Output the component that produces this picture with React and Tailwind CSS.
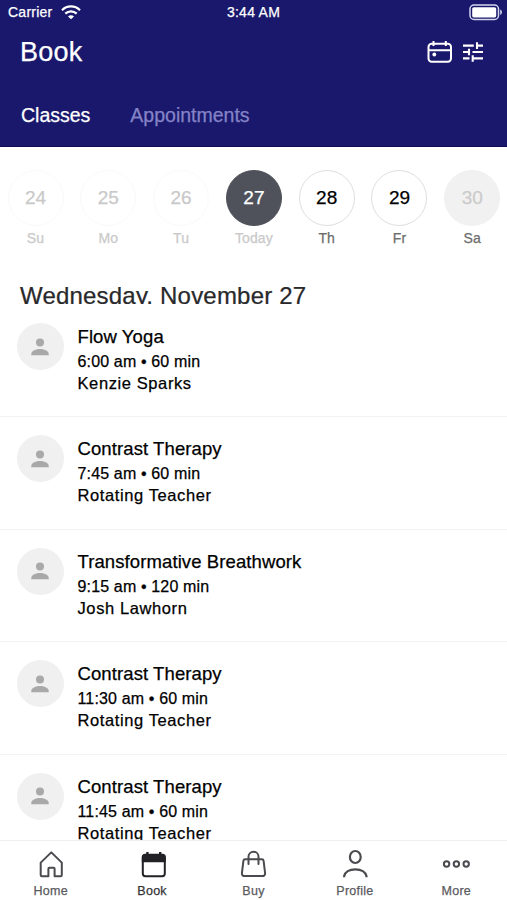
const DAYS = [
  { n: 24, label: "Su", circle: "border-[#fafafa] text-[#c9c9c9]", text: "text-[#c9c9c9]" },
  { n: 25, label: "Mo", circle: "border-[#fafafa] text-[#c9c9c9]", text: "text-[#c9c9c9]" },
  { n: 26, label: "Tu", circle: "border-[#fafafa] text-[#c9c9c9]", text: "text-[#c9c9c9]" },
  { n: 27, label: "Today", circle: "border-[#50525b] bg-[#50525b] text-white", text: "text-[#c9c9c9]" },
  { n: 28, label: "Th", circle: "border-[#dedede] text-black", text: "text-[#6c6c6c]" },
  { n: 29, label: "Fr", circle: "border-[#dedede] text-black", text: "text-[#6c6c6c]" },
  { n: 30, label: "Sa", circle: "border-[#f1f1f1] bg-[#f1f1f1] text-[#cbcbcb]", text: "text-[#6c6c6c]" },
];

const CLASSES = [
  { title: "Flow Yoga", time: "6:00 am • 60 min", teacher: "Kenzie Sparks" },
  { title: "Contrast Therapy", time: "7:45 am • 60 min", teacher: "Rotating Teacher" },
  { title: "Transformative Breathwork", time: "9:15 am • 120 min", teacher: "Josh Lawhorn" },
  { title: "Contrast Therapy", time: "11:30 am • 60 min", teacher: "Rotating Teacher" },
  { title: "Contrast Therapy", time: "11:45 am • 60 min", teacher: "Rotating Teacher" },
];

function WifiIcon() {
  return (
    <svg width="20" height="15" viewBox="0 0 20 15" fill="none" stroke="white" strokeWidth="2.2">
      <path d="M1 5.2C6 .2 14 .2 19 5.2" />
      <path d="M4.3 8.6c3.3-3.1 8.1-3.1 11.4 0" />
      <path d="M10 14.3 7 11.4c1.7-1.6 4.3-1.6 6 0Z" fill="white" stroke="none" />
    </svg>
  );
}

function BatteryIcon() {
  return (
    <svg width="34" height="17" viewBox="0 0 34 17" fill="none">
      <rect x="1" y="1" width="28.5" height="14.5" rx="4" stroke="#d5d5ee" strokeWidth="1.5" />
      <rect x="3.2" y="3.2" width="24" height="10.2" rx="1.6" fill="white" />
      <path d="M31.2 5.6c2.3.8 2.3 4.6 0 5.4Z" fill="#d5d5ee" />
    </svg>
  );
}

function CalendarIcon() {
  return (
    <svg width="26" height="24" viewBox="0 0 26 24" fill="none" stroke="white" strokeWidth="2">
      <rect x="1.5" y="3.7" width="22.5" height="18" rx="3.2" />
      <path d="M2 10.3h21.5M6.5 1v5M18.8 1v5" />
      <circle cx="7.3" cy="14.5" r="1.9" fill="white" stroke="none" />
    </svg>
  );
}

function TuneIcon() {
  return (
    <svg width="20" height="20" viewBox="0 0 20 20" fill="none" stroke="white" strokeWidth="2.1">
      <path d="M0 3.6h10.8M14 .3v6.6M14 3.6h6M0 10h6M6 6.8v6.5M9.5 10H20M0 16.4h6.5M9.7 13.2v6.5M9.7 16.4H20" />
    </svg>
  );
}

function PersonIcon() {
  return (
    <svg width="19" height="18" viewBox="0 0 19 18" fill="#a9a9a9">
      <circle cx="9" cy="4.4" r="4" />
      <path d="M.3 17.3v-1.7c0-3 5-4.7 8.7-4.7s8.7 1.7 8.7 4.7v1.7Z" />
    </svg>
  );
}

function HomeIcon() {
  return (
    <svg width="28" height="28" viewBox="0 0 28 28" fill="none" stroke="#4b4b4f" strokeWidth="2" strokeLinejoin="round">
      <path d="M3.7 12.6 14.3 2.4l10.5 10.2V25a1.2 1.2 0 0 1-1.2 1.2H17.6v-7.5a.9.9 0 0 0-.9-.9h-4.4a.9.9 0 0 0-.9.9v7.5H4.9A1.2 1.2 0 0 1 3.7 25Z" />
    </svg>
  );
}

function BookIcon() {
  return (
    <svg width="28" height="28" viewBox="0 0 28 28">
      <rect x="4.8" y="5" width="22" height="21.2" rx="2.6" fill="white" stroke="#222226" strokeWidth="2" />
      <path d="M3.8 12.3V7c0-1.9 1.4-3.2 3.2-3.2h17.6c1.8 0 3.2 1.3 3.2 3.2v5.3Z" fill="#222226" />
      <path d="M9.4 2v4M22.2 2v4" stroke="#222226" strokeWidth="2.4" />
    </svg>
  );
}

function BuyIcon() {
  return (
    <svg width="28" height="28" viewBox="0 0 28 28" fill="none" stroke="#4b4b4f" strokeWidth="2" strokeLinecap="round" strokeLinejoin="round">
      <path d="M6.2 9.2h16.6a1.8 1.8 0 0 1 1.8 1.6l1.5 12.4a2.6 2.6 0 0 1-2.6 2.9h-18a2.6 2.6 0 0 1-2.6-2.9l1.5-12.4a1.8 1.8 0 0 1 1.8-1.6Z" />
      <path d="M9.5 14V6.8a5 5 0 0 1 10 0V14" />
    </svg>
  );
}

function ProfileIcon() {
  return (
    <svg width="28" height="30" viewBox="0 0 28 30" fill="none" stroke="#4b4b4f" strokeWidth="2.2">
      <ellipse cx="14.3" cy="8" rx="5.4" ry="6" />
      <path d="M3.1 28.3v-1.1C3.9 23 8.3 20.3 14.3 20.3S24.7 23 25.5 27.2v1.1" />
    </svg>
  );
}

function MoreIcon() {
  return (
    <svg width="28" height="28" viewBox="0 0 28 28" fill="none" stroke="#4b4b4f" strokeWidth="2">
      <circle cx="4.6" cy="14" r="2.7" />
      <circle cx="14.4" cy="14" r="2.7" />
      <circle cx="24.2" cy="14" r="2.7" />
    </svg>
  );
}

const NAV = [
  { label: "Home", Icon: HomeIcon, color: "text-[#5a5a5e]" },
  { label: "Book", Icon: BookIcon, color: "text-[#343438]" },
  { label: "Buy", Icon: BuyIcon, color: "text-[#5a5a5e]" },
  { label: "Profile", Icon: ProfileIcon, color: "text-[#5a5a5e]" },
  { label: "More", Icon: MoreIcon, color: "text-[#5a5a5e]" },
];

export default function App() {
  return (
    <div className="flex h-[900px] w-[507px] flex-col overflow-hidden bg-white font-['Liberation_Sans',Arial,sans-serif] text-black [-webkit-text-stroke:0.25px]">
      <header className="h-[147px] shrink-0 border-b border-[#0e0c50] bg-[#19186d] text-white">
        <div className="grid h-[25px] grid-cols-3 items-center pr-[4px] pl-[8px] text-[14px] tracking-[0.25px]">
          <div className="flex items-center gap-[8px]">
            <span>Carrier</span>
            <WifiIcon />
          </div>
          <span className="pr-[4px] text-center">3:44 AM</span>
          <div className="flex justify-end">
            <BatteryIcon />
          </div>
        </div>
        <div className="flex h-[54px] items-center justify-between pr-[24px] pl-[20px]">
          <h1 className="text-[27px] tracking-[0.2px]">Book</h1>
          <div className="flex items-center gap-[10px]">
            <CalendarIcon />
            <TuneIcon />
          </div>
        </div>
        <div className="flex h-[67px] items-center gap-[40px] pt-[7px] pl-[21px] text-[19.5px]">
          <span>Classes</span>
          <span className="text-[#8583c6]">Appointments</span>
        </div>
      </header>

      <div className="flex shrink-0 gap-[17px] pt-[23px] pl-[7.6px]">
        {DAYS.map((d) => (
          <div key={d.n} className="flex w-[55.8px] shrink-0 flex-col items-center">
            <div className={`flex h-[56px] w-[56px] items-center justify-center rounded-full border text-[19px] ${d.circle}`}>
              {d.n}
            </div>
            <span className={`mt-[3px] text-[14px] leading-[18px] tracking-[0.1px] ${d.text}`}>{d.label}</span>
          </div>
        ))}
      </div>

      <h2 className="mt-[35px] h-[22px] shrink-0 overflow-hidden pl-[20px] text-[24px] leading-[27px] tracking-[0.2px] text-[#29292b]">
        Wednesday, November 27
      </h2>

      <main className="mt-px min-h-0 flex-1 overflow-hidden">
        {CLASSES.map((c, i) => (
          <div key={i} className="flex h-[112.4px] gap-[13.5px] border-b border-[#f3f3f3] pt-[18px] pl-[17px]">
            <div className="flex h-[47px] w-[47px] items-center justify-center rounded-full bg-[#f0f0f0]">
              <PersonIcon />
            </div>
            <div className="pt-px">
              <div className="text-[18.5px] leading-[26px] tracking-[0.1px]">{c.title}</div>
              <div className="pt-px text-[16px] leading-[22px] tracking-[0.15px]">{c.time}</div>
              <div className="text-[16.5px] leading-[20px] tracking-[0.6px]">{c.teacher}</div>
            </div>
          </div>
        ))}
      </main>

      <nav className="grid h-[60px] shrink-0 grid-cols-5 border-t border-[#efefef] bg-white">
        {NAV.map(({ label, Icon, color }) => (
          <div key={label} className="flex flex-col items-center pt-[8px]">
            <div className="flex h-[30px] items-center">
              <Icon />
            </div>
            <span className={`mt-[4px] text-[12.5px] leading-[16px] tracking-[0.25px] ${color}`}>{label}</span>
          </div>
        ))}
      </nav>
    </div>
  );
}
